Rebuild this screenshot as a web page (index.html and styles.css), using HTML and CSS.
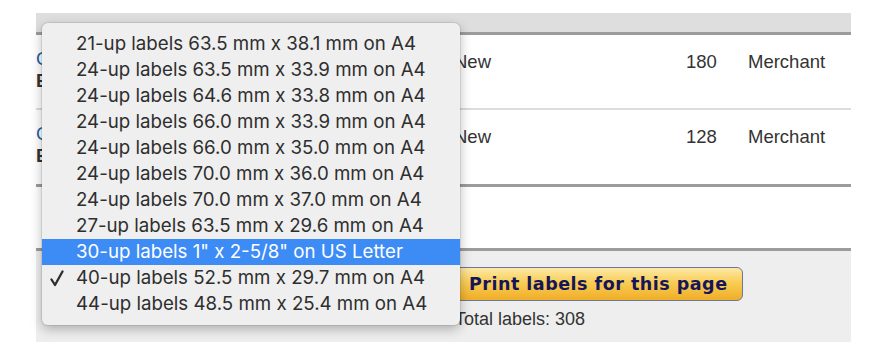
FILE: index.html
```html
<!DOCTYPE html>
<html lang="en">
<head>
<meta charset="UTF-8">
<meta name="viewport" content="width=device-width, initial-scale=1.0">
<title>Print labels</title>
<link rel="stylesheet" href="styles.css">
</head>
<body>
  <div class="panel">
    <div class="head"></div>
    <div class="row">
      <div class="title"><span class="link">Co</span><br><b>Ed</b></div>
      <div class="cond">New</div>
      <div class="qty">180</div>
      <div class="chan">Merchant</div>
    </div>
    <div class="row row-last">
      <div class="title"><span class="link">Co</span><br><b>Ed</b></div>
      <div class="cond">New</div>
      <div class="qty">128</div>
      <div class="chan">Merchant</div>
    </div>
    <div class="spacer"></div>
    <div class="foot">
      <button class="print">Print labels for this page</button>
      <div class="total">Total labels: 308</div>
    </div>

    <ul class="menu">
      <li>21-up labels 63.5 mm x 38.1 mm on A4</li>
      <li>24-up labels 63.5 mm x 33.9 mm on A4</li>
      <li>24-up labels 64.6 mm x 33.8 mm on A4</li>
      <li>24-up labels 66.0 mm x 33.9 mm on A4</li>
      <li>24-up labels 66.0 mm x 35.0 mm on A4</li>
      <li>24-up labels 70.0 mm x 36.0 mm on A4</li>
      <li>24-up labels 70.0 mm x 37.0 mm on A4</li>
      <li>27-up labels 63.5 mm x 29.6 mm on A4</li>
      <li class="hover">30-up labels 1" x 2-5/8" on US Letter</li>
      <li><svg class="check" width="14" height="17" viewBox="0 0 14 17"><path d="M1.5 9.5 L5 15 L12.5 1.5" fill="none" stroke="#2e2e2e" stroke-width="2.3" stroke-linecap="round" stroke-linejoin="round"/></svg>40-up labels 52.5 mm x 29.7 mm on A4</li>
      <li>44-up labels 48.5 mm x 25.4 mm on A4</li>
    </ul>
  </div>
</body>
</html>
```

FILE: styles.css
```css
body {
  margin: 0;
  background: #fff;
  font-family: "Liberation Sans", Arial, sans-serif;
  color: #333;
}
.panel {
  position: relative;
  margin: 13px 0 0 36px;
  width: 815px;
}
.head {
  height: 19px;
  background: #dedede;
  border-bottom: 3px solid #9c9c9c;
}
.row {
  display: grid;
  grid-template-columns: 418px 232px 30px 1fr;
  height: 75px;
  padding-top: 16px;
  box-sizing: border-box;
  background: #fff;
  border-bottom: 2px solid #dcdcdc;
  font-size: 18.5px;
  line-height: 21px;
}
.row-last {
  height: 77px;
  border-bottom: 3px solid #9c9c9c;
}
.title {
  margin-top: -3px;
  overflow: hidden;
  white-space: nowrap;
  line-height: 22px;
}
.link {
  color: #1a5fa8;
}
.qty {
  text-align: right;
}
.chan {
  padding-left: 32px;
}
.spacer {
  height: 61px;
  background: #fff;
  border-bottom: 3px solid #9c9c9c;
}
.foot {
  height: 91px;
  box-sizing: border-box;
  background: #eee;
  padding: 16px 0 0 419px;
}
.print {
  display: block;
  width: 288px;
  height: 34px;
  padding: 0 0 0 13px;
  text-align: left;
  border: 1px solid #6d7896;
  border-radius: 6px;
  background: linear-gradient(#fde9a6, #f9cd55 45%, #f0ad28);
  color: #15155a;
  font-family: "DejaVu Sans", Verdana, sans-serif;
  font-weight: bold;
  font-size: 17.5px;
  letter-spacing: 0.5px;
}
.total {
  margin-top: 8px;
  font-size: 18px;
  line-height: 21px;
}
.menu {
  position: absolute;
  left: 6px;
  top: 10px;
  width: 418px;
  margin: 0;
  padding: 8px 0;
  list-style: none;
  background: #efefef;
  border-radius: 6px;
  box-shadow: 0 0 0 1px rgba(0, 0, 0, 0.08), 0 4px 12px rgba(0, 0, 0, 0.28);
  font-family: Inter, "Liberation Sans", sans-serif;
  font-size: 18.7px;
  color: #2e2e2e;
}
.menu li {
  position: relative;
  height: 26px;
  line-height: 26px;
  padding-left: 34px;
  white-space: nowrap;
}
.menu .hover {
  background: #3d8cf6;
  color: #fff;
}
.check {
  position: absolute;
  left: 8px;
  top: 5px;
}
```
